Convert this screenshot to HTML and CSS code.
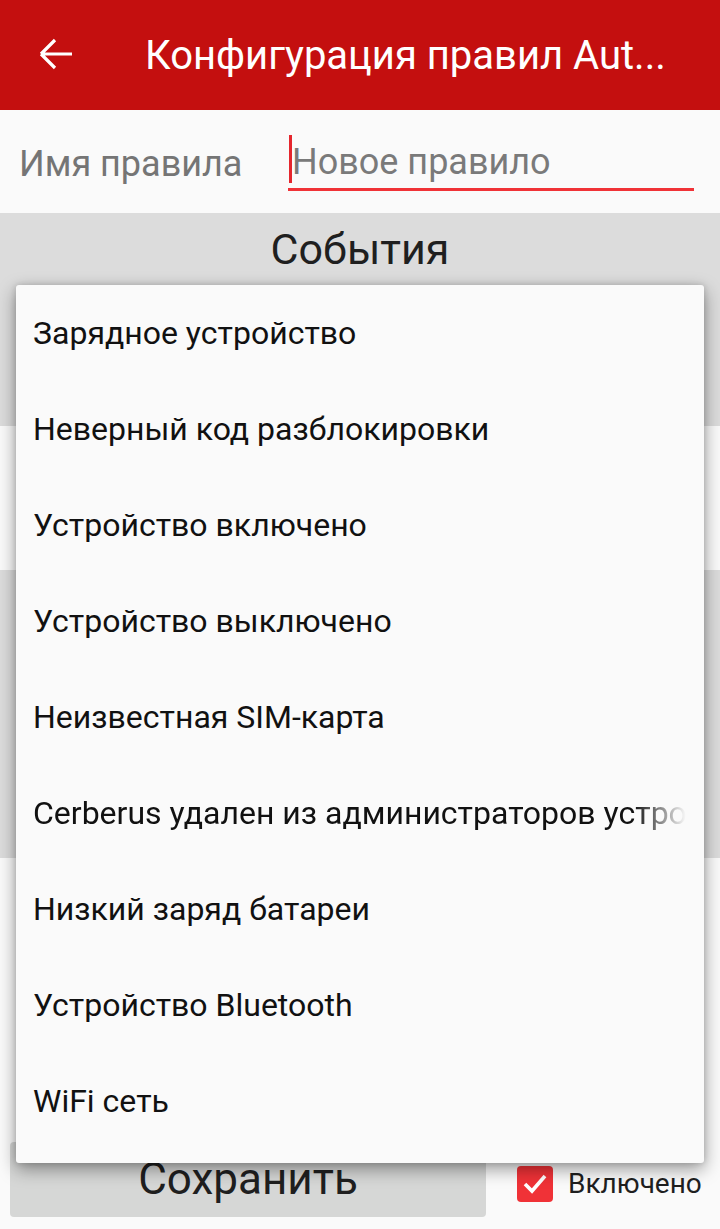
FILE: index.html
```html
<!DOCTYPE html>
<html>
<head lang="ru">
  <meta charset="UTF-8">
  <title>Конфигурация правил</title>
  <link rel="stylesheet" href="styles.css">
</head>
<body>
<div class="app">
  <!--верхняя панель-->
  <div class="appbar">
    <svg class="back" width="34" height="32" viewBox="0 0 34 32">
      <path d="M2 16 H33 M2 16 L16 2 M2 16 L16 30" stroke="#fff" stroke-width="3.2" fill="none"/>
    </svg>
    <div class="appbar-title">Конфигурация правил Aut...</div>
  </div>

  <!--имя правила-->
  <div class="name-row">
    <div class="name-label">Имя правила</div>
    <div class="name-input">
      <span class="cursor"></span>
      <span class="placeholder">Новое правило</span>
    </div>
  </div>

  <div class="section grey events">
    <div class="section-title">События</div>
  </div>
  <div class="section white s2"></div>
  <div class="section grey s3"></div>
  <div class="section white s4"></div>

  <div class="footer">
    <div class="save-btn">Сохранить</div>
    <label class="check">
      <span class="check-box">
        <svg width="26" height="22" viewBox="0 0 26 22">
          <path d="M3 11 L10 18 L23 3" stroke="#fff" stroke-width="3.6" fill="none"/>
        </svg>
      </span>
      <span class="check-text">Включено</span>
    </label>
  </div>

  <!--выпадающий список событий-->
  <ul class="popup">
    <li>Зарядное устройство</li>
    <li>Неверный код разблокировки</li>
    <li>Устройство включено</li>
    <li>Устройство выключено</li>
    <li>Неизвестная SIM-карта</li>
    <li class="fade">Cerberus удален из администраторов устро</li>
    <li>Низкий заряд батареи</li>
    <li>Устройство Bluetooth</li>
    <li>WiFi сеть</li>
  </ul>
</div>
</body>
</html>
```

FILE: styles.css
```css
* {
  margin: 0;
  padding: 0;
  box-sizing: border-box;
}

ul {
  list-style: none;
}

body {
  background-color: #fafafa;
  font-family: Roboto, "Noto Sans", sans-serif;
  width: 720px;
  height: 1229px;
  overflow: hidden;
}

.app {
  position: relative;
  height: 1229px;
}

/*верхняя панель*/
.appbar {
  height: 110px;
  background-color: #c40f0f;
  display: flex;
  align-items: center;
}

.back {
  margin-left: 39px;
  margin-top: -2px;
}

.appbar-title {
  margin-left: 72px;
  color: #fff;
  font-size: 40px;
  white-space: nowrap;
}

/*имя правила*/
.name-row {
  height: 103px;
  display: flex;
  align-items: center;
}

.name-label {
  margin-left: 19px;
  width: 269px;
  color: #757575;
  font-size: 36px;
  margin-top: 4px;
}

.name-input {
  width: 406px;
  height: 56px;
  margin-top: 2px;
  border-bottom: 3px solid #f03237;
  display: flex;
  align-items: center;
  position: relative;
}

.cursor {
  width: 3px;
  height: 48px;
  background-color: #e5262d;
  margin-left: 1px;
  margin-top: -4px;
}

.placeholder {
  color: #7a7a7a;
  font-size: 36px;
  margin-top: 2px;
}

/*секции*/
.section.grey {
  background-color: #dcdcdc;
}

.events {
  height: 213px;
}

.section-title {
  text-align: center;
  font-size: 43px;
  color: #1f1f1f;
  line-height: 72px;
}

.s2 {
  height: 144px;
}

.s3 {
  height: 288px;
}

.s4 {
  height: 284px;
}

/*нижняя панель*/
.footer {
  display: flex;
  align-items: center;
  height: 75px;
}

.save-btn {
  margin-left: 10px;
  width: 476px;
  height: 75px;
  background-color: #d6d7d6;
  border-radius: 4px;
  text-align: center;
  line-height: 75px;
  font-size: 44px;
  color: #1f1f1f;
}

.check {
  display: flex;
  align-items: center;
  margin-left: 31px;
  margin-top: 8px;
}

.check-box {
  width: 36px;
  height: 36px;
  border-radius: 4px;
  background-color: #f03237;
  display: flex;
  align-items: center;
  justify-content: center;
}

.check-text {
  margin-left: 15px;
  font-size: 28px;
  color: #1f1f1f;
}

/*выпадающий список*/
.popup {
  position: absolute;
  left: 16px;
  top: 285px;
  width: 688px;
  height: 878px;
  background-color: #fafafa;
  border-radius: 3px;
  box-shadow: 0 6px 18px rgba(0, 0, 0, 0.4), 0 0 6px rgba(0, 0, 0, 0.15);
  padding: 0 18px 0 17px;
}

.popup li {
  height: 96px;
  line-height: 96px;
  font-size: 32px;
  color: #111;
  white-space: nowrap;
  overflow: hidden;
}

.popup li.fade {
  -webkit-mask-image: linear-gradient(to right, #000 92%, transparent 100%);
  mask-image: linear-gradient(to right, #000 92%, transparent 100%);
}
```
